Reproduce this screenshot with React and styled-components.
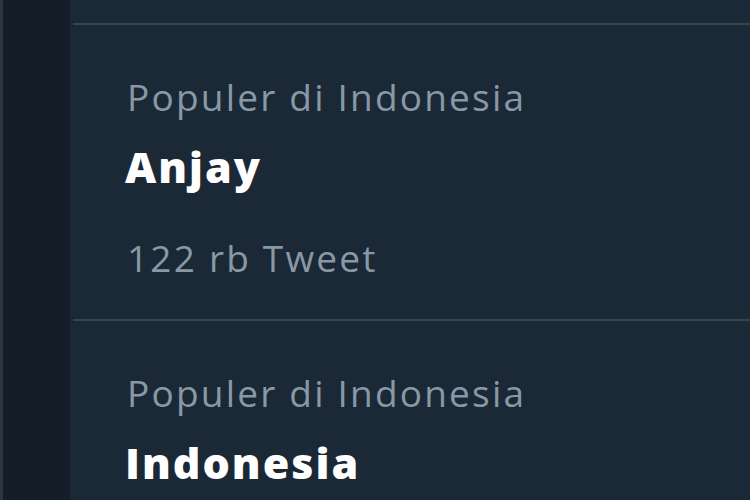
import styled, {createGlobalStyle} from "styled-components"

const GlobalStyle = createGlobalStyle`
	html, body {
		margin: 0;
		padding: 0;
		background: #15202b;
	}
	body {
		font-family: "Open Sans", "Noto Sans", sans-serif;
	}
`

const trends = [
	{id: 1, context: "Populer di Indonesia", name: "Anjay", count: "122 rb Tweet"},
	{id: 2, context: "Populer di Indonesia", name: "Indonesia", count: "48,3 rb Tweet"},
]

const App = () => {
	return (
		<>
			<GlobalStyle />
			<Page>
				<Rail />
				<Panel>
					<Divider />
					{trends.map((t) => (
						<Trend key={t.id}>
							<Context>{t.context}</Context>
							<Name>{t.name}</Name>
							<Count>{t.count}</Count>
							<Divider />
						</Trend>
					))}
				</Panel>
			</Page>
		</>
	)
}

export default App

const Page = styled.div`
	display: flex;
	width: 750px;
	height: 500px;
	overflow: hidden;
	background: #15202b;
`

const Rail = styled.div`
	width: 67px;
	flex-shrink: 0;
	border-left: 3px solid #2c3641;
	background: #151e28;
`

const Panel = styled.div`
	flex: 1;
	display: flex;
	flex-direction: column;
	padding-top: 23px;
	padding-left: 3px;
	background: #1b2836;
`

const Divider = styled.div`
	height: 2px;
	flex-shrink: 0;
	background: #38444d;
`

const Trend = styled.div`
	display: flex;
	flex-direction: column;
	flex-shrink: 0;
`

const Context = styled.div`
	margin-top: 50px;
	padding-left: 54px;
	font-size: 37px;
	line-height: 44px;
	letter-spacing: 2.2px;
	color: #8899a6;
	white-space: nowrap;
`

const Name = styled.div`
	margin-top: 24px;
	padding-left: 52px;
	font-size: 43px;
	line-height: 48px;
	letter-spacing: 2px;
	font-weight: 800;
	color: #ffffff;
	white-space: nowrap;
`

const Count = styled.div`
	margin-top: 45px;
	padding-left: 54px;
	font-size: 37px;
	line-height: 44px;
	letter-spacing: 2.2px;
	color: #8899a6;
	margin-bottom: 39px;
	white-space: nowrap;
`
